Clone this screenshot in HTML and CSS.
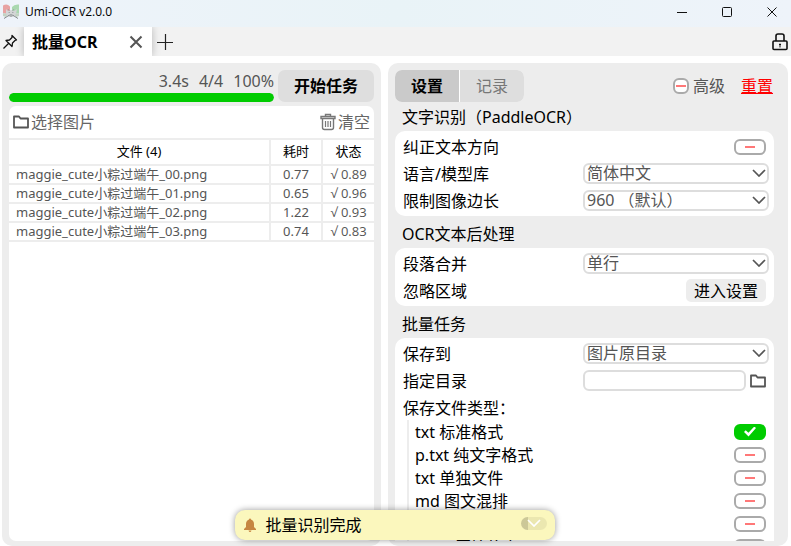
FILE: index.html
```html
<!DOCTYPE html>
<html lang="zh-CN">
<head>
<meta charset="utf-8">
<title>Umi-OCR</title>
<link rel="stylesheet" href="styles.css">
</head>
<body>
<svg class="defs" aria-hidden="true">
  <symbol id="folder" viewBox="0 0 16 14"><path d="M1 1.500h5l1.500 2H15v9H1z" fill="none" stroke="currentColor" stroke-width="1.8" stroke-linejoin="round"/></symbol>
  <symbol id="chevron" viewBox="0 0 14 8"><path d="M1 1l6 6 6-6" fill="none" stroke="currentColor" stroke-width="1.7"/></symbol>
</svg>
<header class="titlebar">
  <svg class="app-icon" viewBox="0 0 16 16" aria-hidden="true">
    <path d="M0 1.500Q4-1 7 2.500V8l-3 2-4-1z" fill="#e8a3a3"/>
    <path d="M16 .5Q11 0 9 3v5l3 2 4-1z" fill="#a9d8b0"/>
    <path d="M0 9l5 1-2 3-3-1zM16 9l-5 1 2 3 3-1z" fill="#c3d3c4"/>
    <path d="M3 5l2 2 3-1 3 1 3-2-1 5-3 3H6l-3-3z" fill="#d3d5d6"/>
    <path d="M1 14.500L6.500 11l1.500 1.500L9.500 11l5.500 3.500" fill="none" stroke="#868b8e"/>
    <path d="M5 5l1.500 2M11 5L9.500 7M5.500 8.500H7M9 8.500h1.500M7 10.500h2" fill="none" stroke="#999ea1" stroke-width=".8"/>
  </svg>
  <h1 class="app-name">Umi-OCR v2.0.0</h1>
  <button class="win-btn" aria-label="最小化"><svg viewBox="0 0 12 12"><path d="M1 6.500h10" stroke="#111"/></svg></button>
  <button class="win-btn" aria-label="最大化"><svg viewBox="0 0 12 12"><rect x="1.500" y="1.500" width="9" height="9" rx="1" fill="none" stroke="#111"/></svg></button>
  <button class="win-btn" aria-label="关闭"><svg viewBox="0 0 12 12"><path d="M1.500 1.500l9 9M10.500 1.500l-9 9" stroke="#111"/></svg></button>
</header>
<nav class="tabbar">
  <button class="bar-btn pin" aria-label="置顶"><svg viewBox="0 0 16 16"><path d="M10 1.500l4.500 4.500-1.500.5-2.500 2.500-.5 3.500-6-6 3.500-.5 2.500-2.500zM6.500 9.500l-5 5" fill="none" stroke="#111" stroke-width="1.3" stroke-linejoin="round"/></svg></button>
  <div class="page-tab">
    <span>批量OCR</span>
    <button class="bar-btn" aria-label="关闭标签页"><svg viewBox="0 0 16 16"><path d="M2.500 2.500l11 11M13.500 2.500l-11 11" stroke="#555" stroke-width="2"/></svg></button>
  </div>
  <button class="bar-btn add" aria-label="新建标签页"><svg viewBox="0 0 16 16"><path d="M0 8.500h16M8.500 0v16" stroke="#222" stroke-width="1.200"/></svg></button>
  <button class="bar-btn lock" aria-label="锁定"><svg viewBox="0 0 16 18"><rect x="1" y="8" width="14" height="8.500" rx="1" fill="none" stroke="#111" stroke-width="1.600"/><path d="M4 8V3q0-2 2-2h4q2 0 2 2v5" fill="none" stroke="#111" stroke-width="1.600"/><path d="M8 10.500v4M7 11.500h2" stroke="#111"/></svg></button>
</nav>
<main class="workspace">
  <section class="panel files">
    <div class="run">
      <div class="status">
        <p class="stats"><span>3.4s</span><span>4/4</span><span>100%</span></p>
        <progress class="bar" max="4" value="4" aria-label="进度"></progress>
      </div>
      <button class="start">开始任务</button>
    </div>
    <div class="card file-card">
      <div class="tools">
        <button class="tool"><svg class="folder"><use href="#folder"/></svg>选择图片</button>
        <button class="tool"><svg class="trash" viewBox="0 0 16 18"><path d="M5.500 3V1.500h5V3M1 3.500h14v2H1zM2.500 6v8.500q0 2 2 2h7q2 0 2-2V6" fill="none" stroke="#777" stroke-width="1.400"/><path d="M5.500 8v6M8 8v6M10.500 8v6" stroke="#777" stroke-width="1.200"/></svg>清空</button>
      </div>
      <table class="list">
        <thead><tr><th>文件 (4)</th><th class="narrow">耗时</th><th class="narrow">状态</th></tr></thead>
        <tbody>
          <tr><td>maggie_cute小粽过端午_00.png</td><td>0.77</td><td>√ 0.89</td></tr>
          <tr><td>maggie_cute小粽过端午_01.png</td><td>0.65</td><td>√ 0.96</td></tr>
          <tr><td>maggie_cute小粽过端午_02.png</td><td>1.22</td><td>√ 0.93</td></tr>
          <tr><td>maggie_cute小粽过端午_03.png</td><td>0.74</td><td>√ 0.83</td></tr>
        </tbody>
      </table>
    </div>
  </section>
  <section class="panel settings">
    <div class="settings-head">
      <div class="segments"><button class="seg on">设置</button><button class="seg">记录</button></div>
      <label class="advanced"><input class="toggle small" type="checkbox">高级</label>
      <a class="reset" href="#reset">重置</a>
    </div>
    <div class="groups">
      <h2>文字识别（PaddleOCR）</h2>
      <div class="card group">
        <div class="row"><label for="deskew">纠正文本方向</label><input class="toggle" id="deskew" type="checkbox"></div>
        <div class="row"><label for="lang">语言/模型库</label><span class="pick"><select id="lang"><option>简体中文</option></select><svg><use href="#chevron"/></svg></span></div>
        <div class="row"><label for="side">限制图像边长</label><span class="pick"><select id="side"><option>960 （默认）</option></select><svg><use href="#chevron"/></svg></span></div>
      </div>
      <h2>OCR文本后处理</h2>
      <div class="card group">
        <div class="row"><label for="merge">段落合并</label><span class="pick"><select id="merge"><option>单行</option></select><svg><use href="#chevron"/></svg></span></div>
        <div class="row"><label for="ignore">忽略区域</label><button class="enter" id="ignore">进入设置</button></div>
      </div>
      <h2>批量任务</h2>
      <div class="card group">
        <div class="row"><label for="dest">保存到</label><span class="pick"><select id="dest"><option>图片原目录</option></select><svg><use href="#chevron"/></svg></span></div>
        <div class="row"><label for="dir">指定目录</label><span class="path"><input id="dir" type="text"><button aria-label="浏览"><svg class="folder"><use href="#folder"/></svg></button></span></div>
        <div class="row">保存文件类型：</div>
        <div class="formats">
          <div class="row"><label for="f1">txt 标准格式</label><input class="toggle" id="f1" type="checkbox" checked></div>
          <div class="row"><label for="f2">p.txt 纯文字格式</label><input class="toggle" id="f2" type="checkbox"></div>
          <div class="row"><label for="f3">txt 单独文件</label><input class="toggle" id="f3" type="checkbox"></div>
          <div class="row"><label for="f4">md 图文混排</label><input class="toggle" id="f4" type="checkbox"></div>
          <div class="row"><label for="f5">csv 表格</label><input class="toggle" id="f5" type="checkbox"></div>
          <div class="row"><label for="f6">jsonl 原始信息</label><input class="toggle" id="f6" type="checkbox"></div>
        </div>
      </div>
    </div>
  </section>
</main>
<div class="toast" role="status">
  <svg class="bell" viewBox="0 0 12 14" aria-hidden="true"><path d="M6 0.500q1 0 1 1Q10 2.500 10 6v3l2 2v1H0v-1l2-2V6q0-3.500 3-4.500 0-1 1-1zM4.500 12.500h3Q7 14 6 14t-1.500-1.500z" fill="#c68642"/></svg>
  <span>批量识别完成</span>
  <button class="dismiss" aria-label="收起"><svg><use href="#chevron"/></svg></button>
</div>
</body>
</html>
```
FILE: styles.css
```css
* { box-sizing: border-box; }
body {
  margin: 0;
  height: 100vh;
  display: flex;
  flex-direction: column;
  overflow: hidden;
  background: #fff;
  color: #000;
  font: 16px/22px "Noto Sans", "Noto Sans CJK SC", sans-serif;
}
button, select, input { font: inherit; color: inherit; margin: 0; }
button { border: 0; padding: 0; background: none; }
svg { display: block; }
h1, h2, p { margin: 0; font-weight: 400; }
.defs { display: none; }

.titlebar {
  flex: none;
  height: 27px;
  display: flex;
  align-items: center;
  padding: 0 3px;
  background: linear-gradient(90deg, #eef3fa, #e9f3f7 50%, #eef3fa);
}
.app-icon { width: 16px; height: 16px; margin: 0 6px 4px 0; }
.app-name { flex: 1; font-family: "Open Sans", sans-serif; font-size: 12px; line-height: 16px; padding-bottom: 3px; }
.win-btn { width: 34px; height: 23px; display: grid; place-items: center; margin: 0 -1px 4px 12px; }
.win-btn svg { width: 12px; height: 12px; }

.tabbar { flex: none; height: 29px; display: flex; align-items: center; background: #f2f2f2; overflow: hidden; }
.bar-btn svg { width: 16px; height: 16px; }
.pin { margin: 0 6px 0 2px; }
.page-tab {
  width: 128px;
  height: 100%;
  display: flex;
  align-items: center;
  justify-content: space-between;
  padding: 0 8px;
  background: #fff;
  box-shadow: 0 0 8px rgba(0, 0, 0, .25);
  font-weight: 700;
}
.add { margin-left: 5px; }
.lock { margin: 0 3px 0 auto; }
.lock svg { height: 18px; }

.workspace { flex: 1; min-height: 0; display: grid; grid-template-columns: 379fr 400fr; gap: 7px; padding: 7px 3px 0 2px; }
.panel { min-width: 0; min-height: 0; display: flex; flex-direction: column; padding: 7px 7px 5px; border-radius: 10px; background: #ededed; }
.card { background: #fff; border-radius: 10px; }

.run { display: flex; gap: 4px; height: 32px; }
.status { flex: 1; display: flex; flex-direction: column; justify-content: space-between; }
.stats { display: flex; justify-content: flex-end; gap: 10px; color: #555; }
.bar { display: block; width: 100%; height: 9px; appearance: none; border: 0; border-radius: 5px; overflow: hidden; background: #ddd; }
.bar::-webkit-progress-bar { background: #ddd; }
.bar::-webkit-progress-value { background: #00cc00; border-radius: 5px; }
.start { width: 96px; border-radius: 7px; background: #dedede; font-weight: 700; }

.file-card { flex: 1; margin-top: 4px; border-radius: 7px; overflow: hidden; }
.tools { display: flex; justify-content: space-between; height: 32px; padding: 0 4px; }
.tool { display: flex; align-items: center; gap: 2px; color: #666; }
.folder { width: 16px; height: 14px; color: #555; }
.trash { width: 16px; height: 18px; }

.list { width: 100%; table-layout: fixed; border-collapse: collapse; font-size: 13px; line-height: 17px; }
.list th, .list td { border: 2px solid #ededed; border-width: 2px 0 2px 2px; padding: 0; text-align: center; }
.list th:first-child, .list td:first-child { border-left: 0; }
.list th { height: 26px; padding-bottom: 2px; font-weight: 400; }
.list td { height: 19px; color: #555; }
.list td:first-child { text-align: left; padding-left: 7px; }
.list td:last-child { font-family: "Open Sans", sans-serif; }
.narrow { width: 52px; }

.settings-head { flex: none; display: flex; align-items: center; height: 32px; }
.segments { display: flex; gap: 1px; height: 100%; margin-right: auto; border-radius: 7px; overflow: hidden; background: #fff; }
.seg { width: 64px; background: #dedede; color: #777; }
.seg.on { background: #cacaca; color: #000; font-weight: 700; }
.advanced { display: flex; align-items: center; gap: 4px; color: #555; }
.reset { margin: 0 8px 0 16px; color: #f00; }

.groups { flex: 1; min-height: 0; overflow: hidden; padding-right: 7px; }
.groups h2 { height: 32px; padding: 6px 7px 0; font-size: 16px; line-height: 24px; }
.groups h2:first-child { height: 29px; padding-top: 3px; }
.group { padding: 2px 8px; }
.row { display: flex; align-items: center; justify-content: space-between; height: 27px; }
.formats { margin: -1px 0 0 4px; padding-left: 6px; border-left: 2px solid #ededed; }
.formats .row { height: 23px; }

.toggle {
  appearance: none;
  width: 32px;
  height: 16px;
  display: grid;
  place-items: center;
  border: 2px solid #aaa;
  border-radius: 6px;
  background: #fff;
}
.toggle::before { content: ""; width: 10px; height: 2px; background: #ff7878; }
.toggle.small { width: 16px; }
.toggle:checked { border-color: #00cc00; background: #00cc00; }
.toggle:checked::before {
  width: 12px;
  height: 10px;
  background: #fff;
  clip-path: polygon(0 55%, 14% 38%, 37% 62%, 86% 0, 100% 16%, 38% 100%);
}

.pick { display: grid; align-items: center; width: 186px; margin-right: -3px; color: #555; }
.pick select, .path input { width: 100%; height: 21px; border: 2px solid #ddd; border-radius: 6px; background: #fff; padding: 0 2px; outline: 0; }
.pick select { grid-area: 1 / 1; appearance: none; line-height: 17px; }
.pick svg { grid-area: 1 / 1; justify-self: end; width: 14px; height: 8px; margin: 0 3px 1px 0; pointer-events: none; }
.path { display: flex; align-items: center; gap: 4px; width: 183px; }
.path input { flex: 1; min-width: 0; }
.enter { width: 80px; height: 23px; border-radius: 5px; background: #ededed; }

.toast {
  position: absolute;
  left: 50%;
  bottom: 6px;
  width: 320px;
  height: 30px;
  margin-left: -161px;
  display: flex;
  align-items: center;
  padding: 0 8px;
  border-radius: 10px;
  background: #fbf7bd;
  box-shadow: 0 0 6px rgba(0, 0, 0, .4);
}
.bell { width: 12px; height: 14px; margin: 0 10px 0 1px; }
.dismiss { display: grid; place-items: center; width: 26px; height: 13px; margin: 0 0 4px auto; border-radius: 7px; background: linear-gradient(90deg, #ccc898 7px, #ebe7b0 7px); color: #fff; }
.dismiss svg { width: 14px; height: 8px; }
```
